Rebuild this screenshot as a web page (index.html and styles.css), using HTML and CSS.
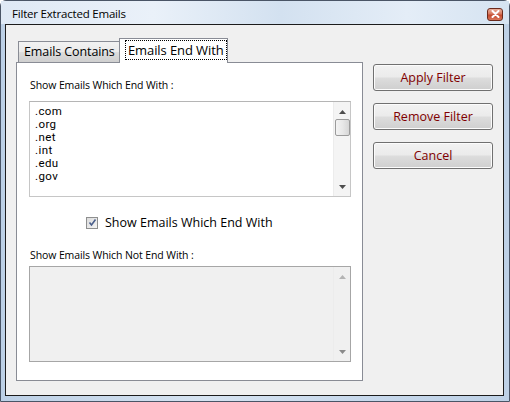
FILE: index.html
```html
<!DOCTYPE html>
<html>
<head>
<meta charset="utf-8">
<link rel="stylesheet" href="styles.css">
</head>
<body>
<div class="window">
  <div class="titlebar">
    <span class="title">Filter Extracted Emails</span>
    <span class="close"><svg width="9" height="8" viewBox="0 0 9 8"><path d="M1.5 1 L7.5 7 M7.5 1 L1.5 7" stroke="#fff" stroke-width="2" stroke-linecap="round"/></svg></span>
  </div>
  <div class="client">
    <div class="tabctl">
      <div class="tabs">
        <div class="tab">Emails Contains</div>
        <div class="tab active"><span class="focus">Emails End With</span></div>
      </div>
      <div class="panel">
        <div class="label first">Show Emails Which End With :</div>
        <div class="listbox">
          <div class="items">
            <div>.com</div>
            <div>.org</div>
            <div>.net</div>
            <div>.int</div>
            <div>.edu</div>
            <div>.gov</div>
          </div>
          <div class="vscroll">
            <svg class="arrow" width="7" height="4" viewBox="0 0 7 4"><path d="M0 4 L3.5 0 L7 4 Z" fill="#4d4d4d"/></svg>
            <div class="thumb"></div>
            <div class="track"></div>
            <svg class="arrow" width="7" height="4" viewBox="0 0 7 4"><path d="M0 0 L3.5 4 L7 0 Z" fill="#4d4d4d"/></svg>
          </div>
        </div>
        <div class="checkrow">
          <span class="checkbox"><svg width="9" height="9" viewBox="0 0 9 9"><path d="M1.5 4.5 L3.5 7 L7.5 1.5" stroke="#4a5f8c" stroke-width="1.6" fill="none"/></svg></span>
          <span class="checklabel">Show Emails Which End With</span>
        </div>
        <div class="label second">Show Emails Which Not End With :</div>
        <div class="listbox disabled">
          <div class="items"></div>
          <div class="vscroll">
            <svg class="arrow" width="7" height="4" viewBox="0 0 7 4"><path d="M0 4 L3.5 0 L7 4 Z" fill="#b4b4b4"/></svg>
            <div class="track"></div>
            <svg class="arrow" width="7" height="4" viewBox="0 0 7 4"><path d="M0 0 L3.5 4 L7 0 Z" fill="#8a8a8a"/></svg>
          </div>
        </div>
      </div>
    </div>
    <div class="buttons">
      <div class="btn">Apply Filter</div>
      <div class="btn">Remove Filter</div>
      <div class="btn">Cancel</div>
    </div>
  </div>
</div>
</body>
</html>
```
FILE: styles.css
```css
* { box-sizing: border-box; }
html, body { margin: 0; padding: 0; }
body { width: 510px; height: 402px; overflow: hidden; font-family: "Open Sans", "Noto Sans", sans-serif; }

.window {
  width: 510px; height: 402px;
  display: flex; flex-direction: column;
  background: linear-gradient(90deg, #bcd0e6 0%, #d6e3f1 40%, #c8d9ec 70%, #bed1e6 100%);
  border: 1px solid #4a5566;
  border-radius: 6px 6px 0 0;
}
.titlebar {
  height: 23px;
  display: flex; align-items: center; justify-content: space-between;
  padding: 0 6px 0 11px;
  background: linear-gradient(90deg, #dfe9f5 0%, #eaf1f9 30%, #d3e1f0 55%, #e4edf7 80%, #d5e3f1 100%);
}
.title { font-size: 11.5px; color: #000; padding-top: 1px; letter-spacing: -0.2px; }
.close {
  width: 16px; height: 13px; margin-top: 3px;
  display: flex; align-items: center; justify-content: center;
  border: 1px solid #6b2a1c; border-radius: 3px;
  background: linear-gradient(180deg, #eab09c 0%, #d4765c 45%, #c3482c 55%, #d8775a 100%);
}
.client {
  flex: 1;
  margin: 0 5px 5px 4px;
  border: 1px solid #1c1c1c;
  background: #f0f0f0;
  display: flex;
  padding: 13px 0 14px 10px;
}
.tabctl { width: 347px; display: flex; flex-direction: column; }
.tabs { display: flex; align-items: flex-end; padding-left: 2px; height: 24px; }
.tab {
  position: relative;
  height: 21px; width: 102px;
  border: 1px solid #898c95; border-bottom: none;
  background: linear-gradient(180deg, #f2f2f2 0%, #ebebeb 50%, #dddddd 51%, #cfcfcf 100%);
  font-size: 12.5px; color: #000;
  padding: 0 0 0 5px; line-height: 19px;
  letter-spacing: -0.1px;
}
.tab.active {
  height: 25px; width: 109px; margin-left: -1px; margin-bottom: -1px; z-index: 1;
  background: #fff; padding: 2px 0 0 6px; line-height: 17px; font-size: 13px;
}
.focus { display: inline-block; outline: 1px dotted #000; outline-offset: 0; padding: 0 2px; line-height: 18px; }
.panel {
  flex: 1;
  background: #fff;
  border: 1px solid #898c95;
  padding: 0 11px 0 12px;
  display: flex; flex-direction: column;
}
.label { font-size: 10.5px; color: #000; padding-left: 1px; letter-spacing: -0.1px; }
.label.first { margin-top: 14px; line-height: 16px; }
.label.second { margin-top: 18px; line-height: 16px; }
.listbox {
  display: flex;
  height: 96px;
  border: 1px solid #c6c6c6;
  border-top-color: #b5b5b5;
  background: #fff;
  margin-top: 8px;
}
.listbox.disabled { background: #f0f0f0; margin-top: 3px; border-color: #a6a6a6; }
.items { flex: 1; padding: 3px 0 0 5px; font-family: Roboto, "Open Sans", sans-serif; font-size: 11.5px; letter-spacing: 0.4px; line-height: 13px; color: #000; }
.vscroll {
  width: 17px; margin-right: 0;
  display: flex; flex-direction: column; align-items: center;
  background: #f4f4f4;
  border-left: 1px solid #ececec;
  padding: 8px 0 7px;
}
.listbox.disabled .vscroll { background: #f0f0f0; }
.thumb {
  width: 15px; height: 17px; margin-top: 5px;
  border: 1px solid #9b9b9b; border-radius: 2px;
  background: linear-gradient(90deg, #f3f3f3 0%, #e8e8e8 50%, #d6d6d6 100%);
}
.track { flex: 1; }
.checkrow { display: flex; align-items: center; margin-top: 19px; padding-left: 57px; height: 13px; }
.checkbox {
  width: 12px; height: 12px;
  border: 1px solid #8e8f8f;
  background: linear-gradient(135deg, #dcdcdc 0%, #f4f4f4 100%);
  display: flex; align-items: center; justify-content: center;
}
.checklabel { font-size: 12.5px; margin-left: 7px; letter-spacing: 0; }
.buttons {
  display: flex; flex-direction: column; gap: 12px;
  margin-left: 10px; padding-top: 26px;
}
.btn {
  width: 120px; height: 27px;
  border: 1px solid #707070; border-radius: 3px;
  background: linear-gradient(180deg, #f2f2f2 0%, #ebebeb 48%, #dddddd 52%, #cfcfcf 100%);
  box-shadow: inset 0 0 0 1px #fcfcfc;
  display: flex; align-items: center; justify-content: center;
  font-size: 12.5px; color: #800000;
}
```
